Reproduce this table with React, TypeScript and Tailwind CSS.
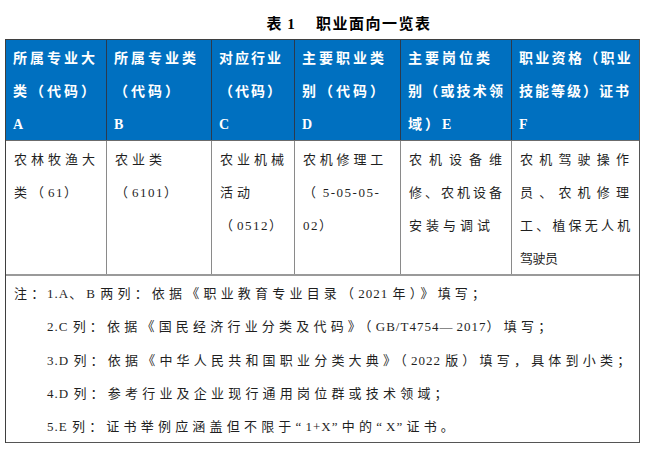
import React from "react";

const FONT = '"Liberation Serif", "Noto Sans CJK SC", serif';

function Mixed({ text, latin }: { text: string; latin: string }) {
  const parts = text.split(/([\x20-\x7e]+)/).filter((p) => p.length > 0);
  return (
    <>
      {parts.map((p, i) =>
        /^[\x20-\x7e]+$/.test(p) ? (
          <span key={i} className={latin}>
            {p}
          </span>
        ) : (
          <span key={i}>{p}</span>
        )
      )}
    </>
  );
}

type Line = { t: string; c: string };

const header: { w: string; lines: Line[] }[] = [
  {
    w: "w-[101px]",
    lines: [
      { t: "所属专业大", c: "tracking-[3px]" },
      { t: "类（代码）", c: "tracking-[3px]" },
      { t: "A", c: "" },
    ],
  },
  {
    w: "w-[105px]",
    lines: [
      { t: "所属专业类", c: "tracking-[3px]" },
      { t: "（代码）", c: "tracking-[3px]" },
      { t: "B", c: "" },
    ],
  },
  {
    w: "w-[83px]",
    lines: [
      { t: "对应行业", c: "tracking-[2px]" },
      { t: "（代码）", c: "tracking-[2px]" },
      { t: "C", c: "" },
    ],
  },
  {
    w: "w-[106px]",
    lines: [
      { t: "主要职业类", c: "tracking-[3px]" },
      { t: "别（代码）", c: "tracking-[3px]" },
      { t: "D", c: "" },
    ],
  },
  {
    w: "w-[111px]",
    lines: [
      { t: "主要岗位类", c: "tracking-[3px]" },
      { t: "别（或技术领", c: "tracking-[2.2px]" },
      { t: "域）E", c: "tracking-[3px]" },
    ],
  },
  {
    w: "w-[127px]",
    lines: [
      { t: "职业资格（职业", c: "tracking-[2.3px]" },
      { t: "技能等级）证书", c: "tracking-[2px]" },
      { t: "F", c: "" },
    ],
  },
];

const body: { w: string; lines: Line[] }[] = [
  {
    w: "w-[101px]",
    lines: [
      { t: "农林牧渔大", c: "tracking-[4px]" },
      { t: "类（61）", c: "tracking-[4px]" },
    ],
  },
  {
    w: "w-[105px]",
    lines: [
      { t: "农业类", c: "tracking-[4px]" },
      { t: "（6101）", c: "tracking-[4px]" },
    ],
  },
  {
    w: "w-[83px]",
    lines: [
      { t: "农业机械", c: "tracking-[4px]" },
      { t: "活动", c: "tracking-[4px]" },
      { t: "（0512）", c: "tracking-[4px]" },
    ],
  },
  {
    w: "w-[106px]",
    lines: [
      { t: "农机修理工", c: "tracking-[3.8px]" },
      { t: "（ 5-05-05-", c: "tracking-[2px]" },
      { t: "02）", c: "tracking-[2px]" },
    ],
  },
  {
    w: "w-[111px]",
    lines: [
      { t: "农机设备维", c: "tracking-[7px]" },
      { t: "修、农机设备", c: "tracking-[3px]" },
      { t: "安装与调试", c: "tracking-[4px]" },
    ],
  },
  {
    w: "w-[127px]",
    lines: [
      { t: "农机驾驶操作", c: "tracking-[6.2px]" },
      { t: "员、农机修理", c: "tracking-[6.2px]" },
      { t: "工、植保无人机", c: "tracking-[3.2px]" },
      { t: "驾驶员", c: "tracking-[-0.5px]" },
    ],
  },
];

const notes = [
  "1.A、B 两列：依据《职业教育专业目录（2021 年）》填写；",
  "2.C 列：依据《国民经济行业分类及代码》（GB/T4754—2017）填写；",
  "3.D 列：依据《中华人民共和国职业分类大典》（2022 版）填写，具体到小类；",
  "4.D 列：参考行业及企业现行通用岗位群或技术领域；",
  "5.E 列：证书举例应涵盖但不限于“1+X”中的“X”证书。",
];

export default function App() {
  return (
    <div
      className="w-[646px] h-[450px] bg-white overflow-hidden text-[#1f1f1f]"
      style={{ fontFamily: FONT }}
      lang="zh-CN"
    >
      <div className="h-[39px] pt-[14px] pl-[52px] flex justify-center">
        <div className="leading-[20px] text-[15px] font-bold text-black whitespace-pre">
          <span className="tracking-[1px]">表 1</span>
          <span className="inline-block w-[20px]" />
          <span className="tracking-[1.5px]">职业面向一览表</span>
        </div>
      </div>

      <div className="ml-[5px] w-[635px] border-x border-t border-[#3f3f3f] border-r-[#555555]">
        {/* header */}
        <div className="flex h-[101px] bg-[#0070c0] border-b border-[#6b6b6b]">
          {header.map((col, i) => (
            <div
              key={i}
              className={`${col.w} shrink-0 pl-[7px] pt-[2px] text-white font-bold text-[14px] leading-[33px] ${
                i < header.length - 1 ? "border-r border-[#2b3a4d]" : ""
              }`}
            >
              {col.lines.map((l, j) => (
                <div key={j} className={`whitespace-nowrap ${l.c}`}>
                  <Mixed text={l.t} latin="tracking-normal" />
                </div>
              ))}
            </div>
          ))}
        </div>

        {/* body */}
        <div className="flex h-[135px] border-b-2 border-[#9a9a9a]">
          {body.map((col, i) => (
            <div
              key={i}
              className={`${col.w} shrink-0 pl-[8px] pt-[2px] text-[13px] leading-[33px] ${
                i < body.length - 1 ? "border-r border-[#8a8a8a]" : ""
              }`}
            >
              {col.lines.map((l, j) => (
                <div key={j} className={`whitespace-nowrap ${l.c}`}>
                  <Mixed text={l.t} latin="tracking-[1.5px]" />
                </div>
              ))}
            </div>
          ))}
        </div>

        {/* notes */}
        <div className="h-[167px] pt-[1px] text-[13px] leading-[33.3px] border-b border-[#555555]">
          {notes.map((n, i) => (
            <div key={i} className="flex whitespace-nowrap tracking-[4.2px]">
              <div className="w-[41px] shrink-0 pl-[8px]">{i === 0 ? "注：" : ""}</div>
              <div>
                <Mixed text={n} latin="tracking-[1px]" />
              </div>
            </div>
          ))}
        </div>
      </div>
    </div>
  );
}
